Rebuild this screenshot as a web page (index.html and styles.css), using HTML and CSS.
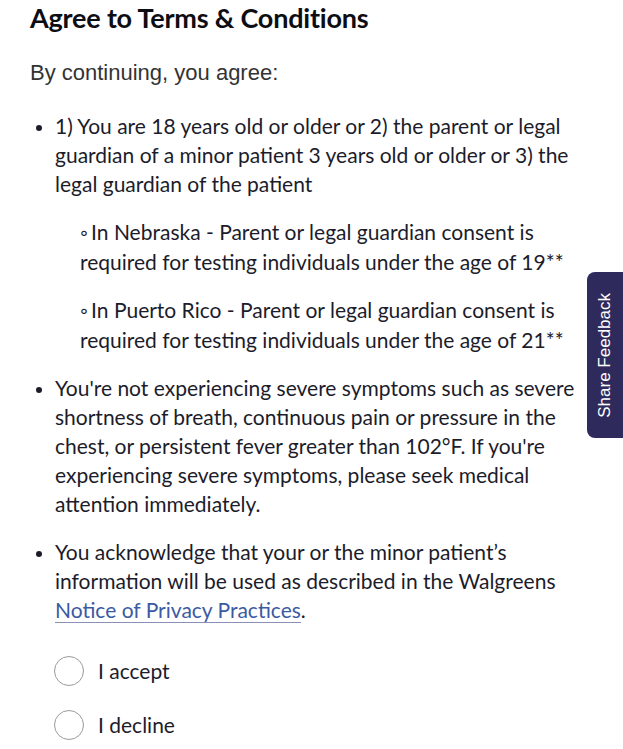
FILE: index.html
```html
<!DOCTYPE html>
<html>
<head>
<meta charset="utf-8">
<link rel="stylesheet" href="styles.css">
</head>
<body>
<main class="page">
  <h1 class="title">Agree to Terms &amp; Conditions</h1>
  <p class="intro">By continuing, you agree:</p>
  <ul class="terms">
    <li>
      <p>1) You are 18 years old or older or 2) the parent or legal guardian of a minor patient 3 years old or older or 3) the legal guardian of the patient</p>
      <ul class="sub">
        <li>In Nebraska - Parent or legal guardian consent is required for testing individuals under the age of 19**</li>
        <li>In Puerto Rico - Parent or legal guardian consent is required for testing individuals under the age of 21**</li>
      </ul>
    </li>
    <li><p>You're not experiencing severe symptoms such as severe shortness of breath, continuous pain or pressure in the chest, or persistent fever greater than 102°F. If you're experiencing severe symptoms, please seek medical attention immediately.</p></li>
    <li><p>You acknowledge that your or the minor patient’s information will be used as described in the Walgreens <a class="link" href="#">Notice of Privacy Practices</a>.</p></li>
  </ul>
  <div class="choices">
    <label class="choice"><span class="radio"></span><span>I accept</span></label>
    <label class="choice"><span class="radio"></span><span>I decline</span></label>
  </div>
</main>
<button class="feedback"><span>Share Feedback</span></button>
</body>
</html>
```
FILE: styles.css
```css
* { box-sizing: border-box; }
html, body { margin: 0; padding: 0; background: #fff; }
body { font-family: Lato, "Open Sans", sans-serif; color: #1c1c2b; overflow: hidden; }
.page { padding: 0 36px 0 30px; width: 623px; }
.title { margin: 2px 0 0; font-size: 27px; font-weight: 700; line-height: 32px; color: #0d0d14; letter-spacing: -0.2px; }
.intro { margin: 25px 0 0; font-family: "Liberation Sans", Arial, sans-serif; font-size: 22px; line-height: 28px; color: #333; }
.terms { margin: 24px 0 0; padding: 0 0 0 25px; list-style: disc; font-size: 21px; line-height: 29px; }
.terms > li { margin: 0 0 19px; }
.terms > li::marker { font-size: 18px; }
.terms p { margin: 0; }
.sub { margin: 19px 0 0; padding: 0 0 0 25px; list-style: none; }
.sub li { margin: 0 0 19px; }
.sub li::before { content: "◦"; font-size: 20px; margin-right: 3px; }
.link { color: #3b5aa3; text-decoration: none; border-bottom: 1.5px solid #8b90b8; }
.choices { display: flex; flex-direction: column; gap: 22px; margin: 31px 0 0 24px; }
.choice { display: flex; align-items: center; gap: 14px; font-size: 21px; line-height: 32px; }
.radio { width: 30px; height: 30px; border-radius: 50%; border: 1.5px solid #9a9a9a; background: #fff; }
.feedback { position: absolute; top: 272px; right: 0; width: 36px; height: 166px; padding: 0; border: none; border-radius: 8px 0 0 8px; background: #2e2b5c; color: #fff; font-family: "Liberation Sans", Arial, sans-serif; font-size: 17px; font-weight: 400; display: flex; align-items: center; justify-content: center; }
.feedback span { writing-mode: vertical-rl; transform: rotate(180deg); white-space: nowrap; }
```
